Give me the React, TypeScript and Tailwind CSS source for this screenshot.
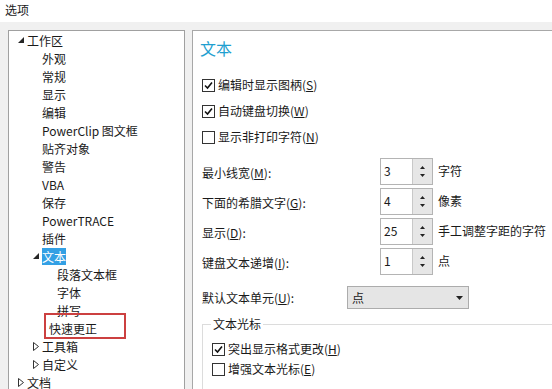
import React from "react";

const font = { fontFamily: '"Noto Sans CJK SC", "Noto Sans", sans-serif' };

function Expanded() {
  return (
    <svg width="6" height="6" viewBox="0 0 6 6" className="shrink-0">
      <polygon points="6,0 6,6 0,6" fill="#262626" />
    </svg>
  );
}
function Collapsed() {
  return (
    <svg width="6" height="9" viewBox="0 0 6 9" className="shrink-0">
      <polygon points="0.5,0.5 5.5,4.5 0.5,8.5" fill="none" stroke="#333" strokeWidth="1" />
    </svg>
  );
}

function TreeRow({
  indent,
  icon,
  children,
}: {
  indent: number;
  icon?: "e" | "c";
  children: React.ReactNode;
}) {
  return (
    <div className="h-[18px] flex items-center" style={{ paddingLeft: indent }}>
      <div className="w-[9px] flex items-center justify-start">
        {icon === "e" && <Expanded />}
        {icon === "c" && <Collapsed />}
      </div>
      <div className="leading-[17px] whitespace-nowrap">{children}</div>
    </div>
  );
}

function Check({ checked }: { checked: boolean }) {
  return (
    <div className="w-[13px] h-[13px] border border-[#333] bg-white flex items-center justify-center shrink-0">
      {checked && (
        <svg width="9" height="9" viewBox="0 0 9 9">
          <polyline points="1,4.5 3.5,7 8,1.5" fill="none" stroke="#111" strokeWidth="1.6" />
        </svg>
      )}
    </div>
  );
}

function CheckRow({ checked, text, k, h }: { checked: boolean; text: string; k: string; h: string }) {
  return (
    <div className={`${h} flex items-center gap-[3px]`}>
      <Check checked={checked} />
      <span className="whitespace-nowrap">
        {text}(<span className="underline">{k}</span>)
      </span>
    </div>
  );
}

function Spin({ label, k, value, unit }: { label: string; k: string; value: string; unit: string }) {
  return (
    <div className="h-[30px] flex items-center">
      <div className="w-[178px] mt-[4px] whitespace-nowrap">
        {label}(<span className="underline">{k}</span>):
      </div>
      <div className="flex h-[27px] border border-[#b4b4b4]">
        <div className="w-[31px] bg-white pl-[3px] flex items-center">{value}</div>
        <div className="w-[20px] bg-[#e6e6e6] border-l border-[#c8c8c8] flex flex-col items-center justify-center gap-[5px]">
          <svg width="5" height="3" viewBox="0 0 5 3">
            <polygon points="2.5,0 5,3 0,3" fill="#222" />
          </svg>
          <svg width="5" height="3" viewBox="0 0 5 3">
            <polygon points="0,0 5,0 2.5,3" fill="#222" />
          </svg>
        </div>
      </div>
      <div className="ml-[5px] whitespace-nowrap">{unit}</div>
    </div>
  );
}

export default function App() {
  return (
    <div
      className="w-[552px] h-[389px] bg-[#f0f0f0] overflow-hidden flex flex-col text-[12px] text-[#1a1a1a]"
      style={font}
    >
      <div className="h-[22px] bg-white shrink-0 flex items-center pl-[5px] pb-[2px]">选项</div>
      <div className="flex flex-1 pt-[8px] min-h-0">
        <div className="ml-[8px] w-[177px] border border-[#a0a0a0] bg-white relative h-[420px] shrink-0">
          <TreeRow indent={9} icon="e">工作区</TreeRow>
          <TreeRow indent={24}>外观</TreeRow>
          <TreeRow indent={24}>常规</TreeRow>
          <TreeRow indent={24}>显示</TreeRow>
          <TreeRow indent={24}>编辑</TreeRow>
          <TreeRow indent={24}>PowerClip 图文框</TreeRow>
          <TreeRow indent={24}>贴齐对象</TreeRow>
          <TreeRow indent={24}>警告</TreeRow>
          <TreeRow indent={24}>VBA</TreeRow>
          <TreeRow indent={24}>保存</TreeRow>
          <TreeRow indent={24}>PowerTRACE</TreeRow>
          <TreeRow indent={24}>插件</TreeRow>
          <div className="h-[18px] flex items-center pl-[24px]">
            <div className="w-[9px] flex items-center">
              <Expanded />
            </div>
            <div className="bg-[#33a0e4] text-white leading-[17px] px-0">文本</div>
          </div>
          <TreeRow indent={39}>段落文本框</TreeRow>
          <TreeRow indent={39}>字体</TreeRow>
          <TreeRow indent={39}>拼写</TreeRow>
          <TreeRow indent={31}>快速更正</TreeRow>
          <TreeRow indent={24} icon="c">工具箱</TreeRow>
          <TreeRow indent={24} icon="c">自定义</TreeRow>
          <TreeRow indent={9} icon="c">文档</TreeRow>
          <div className="absolute left-[35px] top-[282px] w-[82px] h-[26px] border-2 border-[#cc4040]" />
        </div>
        <div className="ml-[7px] flex-1 border-l border-t border-[#a8a8a8] bg-white pl-[9px] overflow-hidden">
          <div className="h-[34px] flex items-center -ml-[2px] text-[16px] text-[#1f9fd0]">文本</div>
          <div className="mt-[7px]">
            <CheckRow h="h-[26px]" checked text="编辑时显示图柄" k="S" />
            <CheckRow h="h-[26px]" checked text="自动键盘切换" k="W" />
            <CheckRow h="h-[26px]" checked={false} text="显示非打印字符" k="N" />
          </div>
          <div className="mt-[6px]">
            <Spin label="最小线宽" k="M" value="3" unit="字符" />
            <Spin label="下面的希腊文字" k="G" value="4" unit="像素" />
            <Spin label="显示" k="D" value="25" unit="手工调整字距的字符" />
            <Spin label="键盘文本递增" k="I" value="1" unit="点" />
          </div>
          <div className="mt-[10px] h-[23px] flex items-center">
            <div className="w-[145px] whitespace-nowrap">
              默认文本单元(<span className="underline">U</span>):
            </div>
            <div className="w-[122px] h-[23px] bg-[#e5e5e5] border border-[#acacac] flex items-center justify-between pl-[4px] pr-[5px]">
              <span>点</span>
              <svg width="7" height="4" viewBox="0 0 7 4">
                <polygon points="0,0 7,0 3.5,4" fill="#222" />
              </svg>
            </div>
          </div>
          <fieldset className="mt-[7px] border-t border-l border-[#dcdcdc] pl-[9px] pb-[20px]">
            <legend className="-ml-[1px] px-[2px] leading-[16px]">文本光标</legend>
            <div className="pt-[7px]">
              <CheckRow h="h-[20px]" checked text="突出显示格式更改" k="H" />
              <CheckRow h="h-[20px]" checked={false} text="增强文本光标" k="E" />
            </div>
          </fieldset>
        </div>
      </div>
    </div>
  );
}
